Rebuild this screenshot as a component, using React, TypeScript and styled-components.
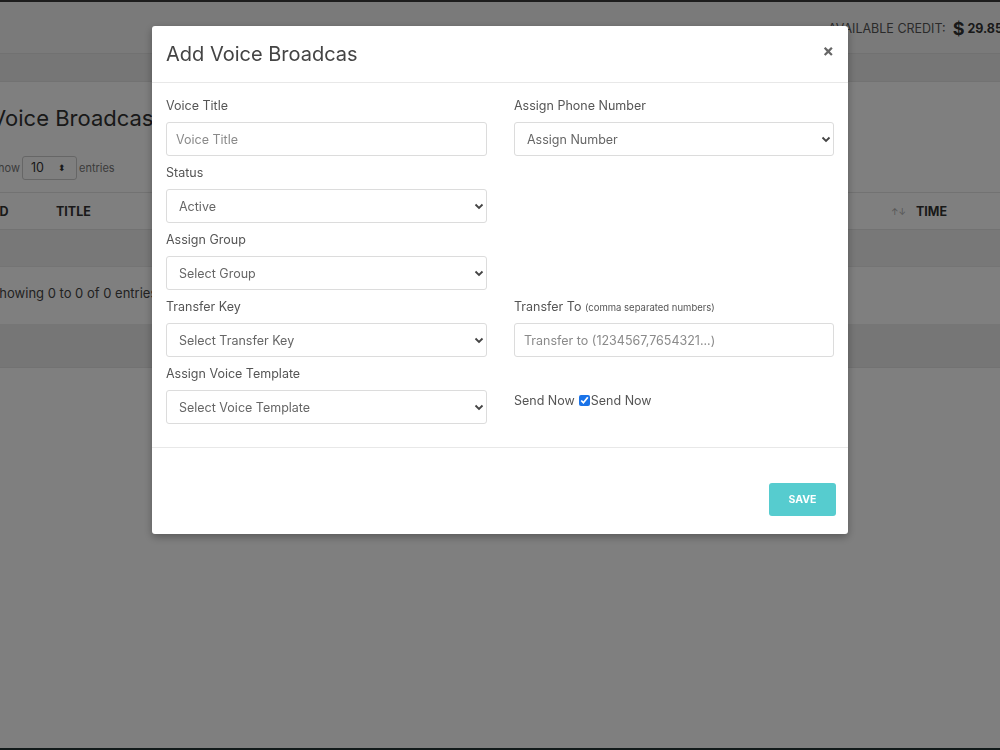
import React from 'react'
import styled, {createGlobalStyle} from 'styled-components'

const GlobalStyle = createGlobalStyle`
  html, body {
    margin: 0;
    padding: 0;
    width: 1000px;
    height: 750px;
    overflow: hidden;
    background: #ffffff;
    font-family: Inter, "Open Sans", sans-serif;
    color: #333;
  }
  * { box-sizing: border-box; }
`

const Page = styled.div`
  width: 1000px;
  height: 750px;
  overflow: hidden;
  display: flex;
  flex-direction: column;
  border-top: 2px solid #3a3a3a;
  border-bottom: 2px solid #253535;
`

const TopBar = styled.div`
  height: 52px;
  background: #f5f5f5;
  border-bottom: 1px solid #e2e2e2;
  display: flex;
  justify-content: flex-end;
  align-items: center;
  padding-top: 2px;
`

const Credit = styled.div`
  display: flex;
  align-items: center;
  gap: 7px;
  margin-right: -3px;
  font-size: 12.5px;
  color: #555;
  white-space: nowrap;
`

const CreditValue = styled.span`
  font-weight: 700;
  color: #333;
  font-size: 12.5px;
  display: flex;
  align-items: center;
  gap: 3px;
`

const Dollar = styled.span`
  font-size: 18px;
`

const Band = styled.div<{h: number}>`
  height: ${p => p.h}px;
  background: #ececec;
  border-bottom: 1px solid #e4e4e4;
`

const Card = styled.div`
  background: #fff;
  margin-left: -9px;
  display: flex;
  flex-direction: column;
`

const PageTitle = styled.h2`
  margin: 0;
  padding-top: 23px;
  font-size: 22px;
  font-weight: 400;
  color: #333;
  height: 63px;
`

const LengthRow = styled.div`
  display: flex;
  align-items: center;
  gap: 2px;
  font-size: 11px;
  color: #777;
  height: 47px;
  padding-bottom: 2px;
`

const LengthBox = styled.div`
  width: 55px;
  height: 24px;
  border: 1px solid #ccc;
  border-radius: 3px;
  display: flex;
  align-items: center;
  justify-content: space-between;
  padding: 0 10px 0 8px;
  font-size: 12.5px;
  color: #333;
`

const TableHead = styled.div`
  height: 38px;
  border-top: 1px solid #e4e4e4;
  border-bottom: 1px solid #e4e4e4;
  display: flex;
  align-items: center;
  font-size: 12.5px;
  font-weight: 700;
  color: #333;
`

const HeadCell = styled.div<{w?: number}>`
  width: ${p => (p.w ? `${p.w}px` : 'auto')};
  padding-left: 5px;
  display: flex;
  align-items: center;
  gap: 10px;
`

const SortIcon = styled.span`
  font-size: 9px;
  color: #aaa;
  font-weight: 400;
`

const EmptyRow = styled.div`
  height: 37px;
  background: #f1f1f1;
  border-bottom: 1px solid #e8e8e8;
`

const InfoRow = styled.div`
  height: 57px;
  display: flex;
  align-items: center;
  font-size: 13px;
  color: #444;
  padding-bottom: 6px;
`

const Overlay = styled.div`
  position: fixed;
  inset: 0;
  background: rgba(0, 0, 0, 0.5);
  display: flex;
  justify-content: center;
  align-items: flex-start;
  padding-top: 26px;
`

const Modal = styled.div`
  width: 696px;
  background: #fff;
  border-radius: 3px;
  box-shadow: 0 3px 9px rgba(0, 0, 0, 0.3);
  display: flex;
  flex-direction: column;
`

const ModalHeader = styled.div`
  height: 57px;
  border-bottom: 1px solid #e8e8e8;
  display: flex;
  align-items: center;
  justify-content: space-between;
  padding: 0 14px 0 14px;
`

const ModalTitle = styled.h4`
  margin: 0;
  font-size: 20px;
  font-weight: 400;
  color: #444;
`

const Close = styled.span`
  font-size: 17px;
  font-weight: 700;
  color: #666;
  margin-top: -6px;
`

const ModalBody = styled.div`
  padding: 15px 14px 14px 14px;
  display: grid;
  grid-template-columns: 321px 320px;
  column-gap: 27px;
  border-bottom: 1px solid #e8e8e8;
`

const Column = styled.div`
  display: flex;
  flex-direction: column;
`

const Field = styled.div`
  display: flex;
  flex-direction: column;
  height: 67px;
`

const Spacer = styled.div<{h: number}>`
  height: ${p => p.h}px;
`

const Label = styled.label`
  font-size: 12.5px;
  color: #555;
  height: 24px;
  line-height: 16px;
`

const Small = styled.span`
  font-size: 9.5px;
`

const TextInput = styled.input`
  height: 34px;
  width: 100%;
  border: 1px solid #dcdcdc;
  border-radius: 3px;
  padding: 0 9px;
  font-family: inherit;
  font-size: 12.5px;
  color: #555;
  outline: none;
  &::placeholder {
    color: #8a8a8a;
  }
`

const SelectWrap = styled.div`
  position: relative;
  height: 34px;
`

const Select = styled.select`
  appearance: none;
  width: 100%;
  height: 34px;
  border: 1px solid #dcdcdc;
  border-radius: 3px;
  background: #fff;
  padding: 0 12px;
  font-family: inherit;
  font-size: 12.5px;
  color: #666;
  outline: none;
`

const Chevron = styled.svg`
  position: absolute;
  right: 3px;
  top: 14px;
  pointer-events: none;
`

const CheckRow = styled.div`
  display: flex;
  align-items: center;
  font-size: 12.5px;
  color: #555;
  margin-top: 2px;
`

const Check = styled.input`
  width: 11px;
  height: 11px;
  margin: 0 1px 0 4px;
  accent-color: #1a73e8;
`

const ModalFooter = styled.div`
  display: flex;
  justify-content: flex-end;
  padding: 35px 12px 18px 14px;
`

const SaveButton = styled.button`
  width: 67px;
  height: 33px;
  border: none;
  border-radius: 3px;
  background: #56cccf;
  color: #fff;
  font-family: inherit;
  font-size: 10.5px;
  font-weight: 700;
`

const Arrow = () => (
  <Chevron width="10" height="7" viewBox="0 0 10 7">
    <path d="M1.5 1.5 L5 5 L8.5 1.5" fill="none" stroke="#444" strokeWidth="1.8" />
  </Chevron>
)

const SelectField = ({label, value}: {label: string; value: string}) => (
  <Field>
    <Label>{label}</Label>
    <SelectWrap>
      <Select defaultValue={value}>
        <option>{value}</option>
      </Select>
      <Arrow />
    </SelectWrap>
  </Field>
)

const App = () => {
  return (
    <>
      <GlobalStyle />
      <Page>
        <TopBar>
          <Credit>
            AVAILABLE CREDIT:
            <CreditValue>
              <Dollar>$</Dollar> 29.85
            </CreditValue>
          </Credit>
        </TopBar>
        <Band h={28} />
        <Card>
          <PageTitle>Voice Broadcast</PageTitle>
          <LengthRow>
            Show
            <LengthBox>
              10 <span style={{fontSize: 9}}>⬍</span>
            </LengthBox>
            entries
          </LengthRow>
          <TableHead>
            <HeadCell w={60}>ID</HeadCell>
            <HeadCell w={835}>TITLE</HeadCell>
            <HeadCell>
              <SortIcon>↑↓</SortIcon>TIME
            </HeadCell>
          </TableHead>
          <EmptyRow />
          <InfoRow>Showing 0 to 0 of 0 entries</InfoRow>
        </Card>
        <Band h={44} />
      </Page>

      <Overlay>
        <Modal>
          <ModalHeader>
            <ModalTitle>Add Voice Broadcas</ModalTitle>
            <Close>×</Close>
          </ModalHeader>
          <ModalBody>
            <Column>
              <Field>
                <Label>Voice Title</Label>
                <TextInput placeholder="Voice Title" />
              </Field>
              <SelectField label="Status" value="Active" />
              <SelectField label="Assign Group" value="Select Group" />
              <SelectField label="Transfer Key" value="Select Transfer Key" />
              <SelectField label="Assign Voice Template" value="Select Voice Template" />
            </Column>
            <Column>
              <SelectField label="Assign Phone Number" value="Assign Number" />
              <Spacer h={134} />
              <Field>
                <Label>
                  Transfer To <Small>(comma separated numbers)</Small>
                </Label>
                <TextInput placeholder="Transfer to (1234567,7654321...)" />
              </Field>
              <Spacer h={25} />
              <CheckRow>
                Send Now
                <Check type="checkbox" defaultChecked />
                Send Now
              </CheckRow>
            </Column>
          </ModalBody>
          <ModalFooter>
            <SaveButton>SAVE</SaveButton>
          </ModalFooter>
        </Modal>
      </Overlay>
    </>
  )
}

export default App
